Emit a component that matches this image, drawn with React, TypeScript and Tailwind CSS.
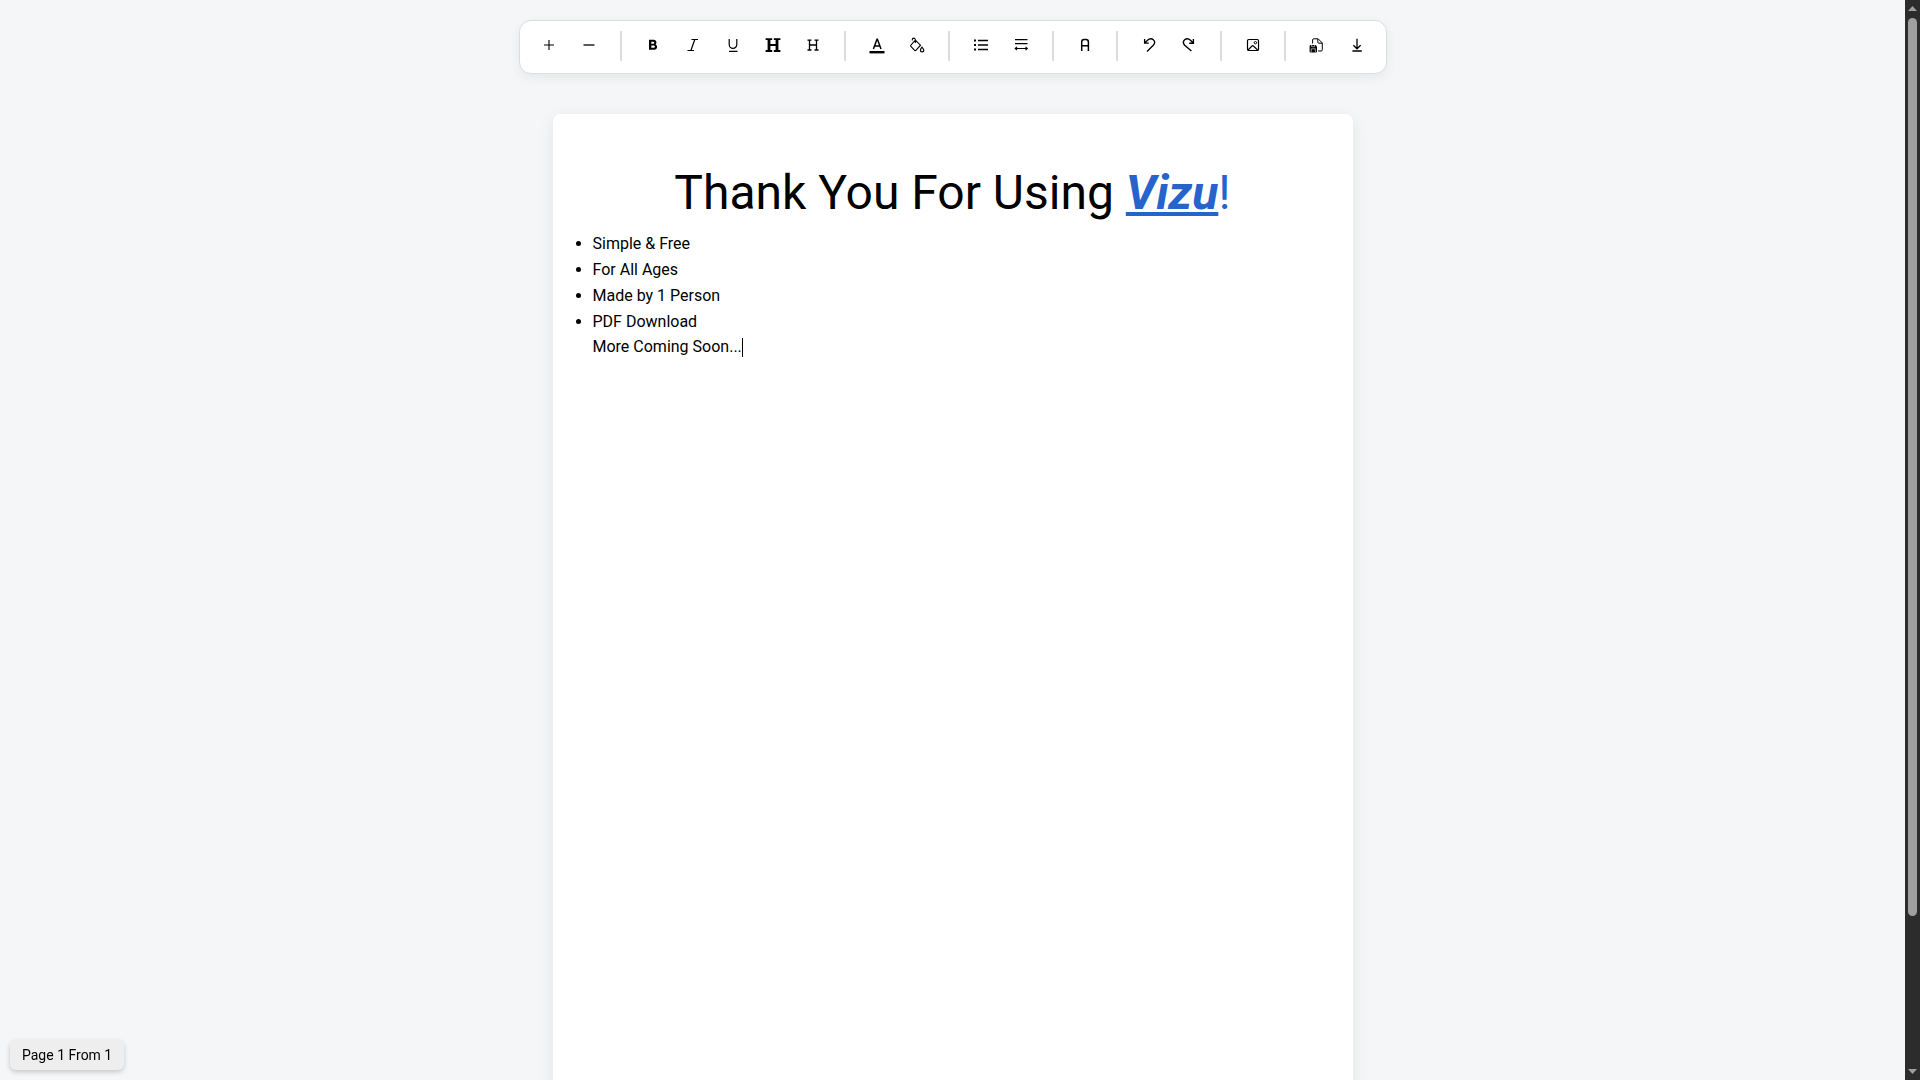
import React from 'react';
import clsx from 'clsx';

type Tool = {label: string; icon: React.ReactNode};

const toolGroups: Tool[][] = [
  [
    {
      label: 'Increase font size',
      icon: <path d="M5 10h10M10 5v10" strokeWidth="1.1" />,
    },
    {
      label: 'Decrease font size',
      icon: <path d="M4.5 10h11" strokeWidth="1.3" />,
    },
  ],
  [
    {
      label: 'Bold',
      icon: (
        <path
          d="M6 4.8h4.9a2.7 2.7 0 0 1 1.8 4.6 2.9 2.9 0 0 1-1.4 5.4H6zM8.3 6.8v1.9h2a.95.95 0 0 0 0-1.9zM8.3 10.6v2.2h2.5a1.1 1.1 0 0 0 0-2.2z"
          fill="currentColor"
          fillRule="evenodd"
          stroke="none"
        />
      ),
    },
    {
      label: 'Italic',
      icon: <path d="M8.5 4.5H15M4.5 15.5H11M11.8 4.5L7.9 15.5" />,
    },
    {
      label: 'Underline',
      icon: <path d="M6.2 4v5.6a3.8 3.8 0 0 0 7.6 0V4M6 16.3h8.5" />,
    },
    {
      label: 'Large heading',
      icon: (
        <>
          <path d="M6 4v12M14 4v12" strokeWidth="2.8" />
          <path d="M2.6 4.2h6.6M10.8 4.2h6.6M2.6 16h6.6M10.8 16h6.6M6 10h8" strokeWidth="1.8" />
        </>
      ),
    },
    {
      label: 'Small heading',
      icon: (
        <path
          d="M6.5 5v10M13.5 5v10M6.5 10h7M4.5 5.2h4M11.5 5.2h4M4.5 15h4M11.5 15h4"
          strokeWidth="1.3"
        />
      ),
    },
  ],
  [
    {
      label: 'Text color',
      icon: (
        <>
          <path d="M6.4 14L10 4.3h.4L14 14M7.6 11h5.2" strokeWidth="1.5" />
          <path d="M2.5 17.2h15" strokeWidth="2.4" />
        </>
      ),
    },
    {
      label: 'Highlight color',
      icon: (
        <>
          <path
            d="M8.3 5.2l5.2 5-4.6 5.1a.9.9 0 0 1-1.3 0L3.9 11.4a.9.9 0 0 1 0-1.3zM8.3 8V4.6a1.5 1.5 0 0 0-3 0v1"
            strokeWidth="1.1"
          />
          <path d="M15 12.2c1.1 1.3 1.8 2.1 1.8 3a1.7 1.7 0 0 1-3.4 0c0-.9.6-1.7 1.6-3z" />
        </>
      ),
    },
  ],
  [
    {
      label: 'Bullet list',
      icon: (
        <>
          <path d="M7 5.5h10M7 10h10M7 14.5h10" strokeWidth="1.6" />
          <path d="M3 5.5h2M3 10h2M3 14.5h2" strokeWidth="1.8" />
        </>
      ),
    },
    {
      label: 'Line spacing',
      icon: (
        <>
          <path d="M4 4.7h12.5M4 8.7h12.5" strokeWidth="1.3" />
          <path
            d="M4.2 13.5h12M6 11.8l-1.8 1.7L6 15.2M14.5 11.8l1.8 1.7-1.8 1.7"
            strokeWidth="1.1"
          />
        </>
      ),
    },
  ],
  [
    {
      label: 'Font family',
      icon: (
        <path
          d="M6.7 16V7A2.4 2.4 0 0 1 9.1 4.6h1.9A2.4 2.4 0 0 1 13.4 7v9M6.7 10.8h6.7"
          strokeWidth="1.5"
        />
      ),
    },
  ],
  [
    {
      label: 'Undo',
      icon: (
        <path
          d="M5.6 4v4.2h4.2M5.8 8l2.7-2.7c4.2-3.8 9.4.8 5.8 5L8 16.5"
          strokeWidth="1.3"
        />
      ),
    },
    {
      label: 'Redo',
      icon: (
        <path
          d="M14.4 4v4.2h-4.2M14.2 8l-2.7-2.7c-4.2-3.8-9.4.8-5.8 5L12.4 16"
          strokeWidth="1.4"
        />
      ),
    },
  ],
  [
    {
      label: 'Insert image',
      icon: (
        <>
          <rect x="4.5" y="4.5" width="11" height="11" rx="1.3" />
          <circle cx="12.4" cy="7.7" r="1.2" strokeWidth="1" />
          <path d="M5 15l4-4a1 1 0 0 1 1.4 0l4.2 4" strokeWidth="1.1" />
        </>
      ),
    },
  ],
  [
    {
      label: 'Save document',
      icon: (
        <>
          <path
            d="M5.6 8.5V5a1.2 1.2 0 0 1 1.2-1.2h4.4L15.3 8v6.8a1.2 1.2 0 0 1-1.2 1.2h-3M10.8 4v3.2a1 1 0 0 0 1 1h3.4"
            strokeWidth="1"
          />
          <path
            d="M3.6 9.9h5l1.4 1.5v5a1 1 0 0 1-1 1H3.6a1 1 0 0 1-1-1v-5.5a1 1 0 0 1 1-1z"
            fill="currentColor"
            stroke="none"
          />
          <path d="M4.6 10v1.7h3V10M4.2 17.2v-3.4h4.2v3.4" stroke="#fff" strokeWidth=".6" />
        </>
      ),
    },
    {
      label: 'Download PDF',
      icon: (
        <path
          d="M10 3.8v9.8M6.4 10.2l3.6 3.6 3.6-3.6M5.4 16h9.4"
          strokeWidth="1.3"
        />
      ),
    },
  ],
];

const features = ['Simple & Free', 'For All Ages', 'Made by 1 Person', 'PDF Download'];

const ToolButton = ({label, icon}: Tool) => (
  <button
    type="button"
    aria-label={label}
    title={label}
    className="flex h-7 w-8 items-center justify-center rounded hover:bg-gray-100">
    <svg
      viewBox="0 0 20 20"
      className="size-5"
      fill="none"
      stroke="currentColor"
      strokeWidth="1.2"
      aria-hidden="true">
      {icon}
    </svg>
  </button>
);

const Toolbar = () => (
  <header
    role="toolbar"
    aria-label="Formatting"
    className="flex items-start gap-2 rounded-xl border border-[#dddddd] bg-white px-[13px] pt-2.5 pb-3 shadow-[0_4px_12px_rgba(0,0,0,0.06)]">
    {toolGroups.map((group, i) => (
      <div key={group[0].label} className="flex gap-2">
        {i > 0 && <span className="mx-[7px] h-[30px] w-0.5 bg-[#dddddd]" />}
        {group.map((tool) => (
          <ToolButton key={tool.label} {...tool} />
        ))}
      </div>
    ))}
  </header>
);

const Scrollbar = () => (
  <div
    aria-hidden="true"
    className="flex w-[15px] shrink-0 flex-col items-center bg-[#2c2c2c] py-1.5 text-[#9f9f9f]">
    <svg viewBox="0 0 9 5" className="h-[5px] w-[9px]" fill="currentColor">
      <path d="M0 5L4.5 0L9 5z" />
    </svg>
    <div className="flex w-[9px] grow flex-col py-[7px]">
      <div className="h-[86%] rounded-full bg-[#9f9f9f]" />
    </div>
    <svg viewBox="0 0 9 5" className="h-[5px] w-[9px]" fill="currentColor">
      <path d="M0 0L4.5 5L9 0z" />
    </svg>
  </div>
);

const Page = () => (
  <article
    className={clsx(
      'min-h-[1123px] w-full max-w-[800px] shrink-0 rounded-lg bg-white p-10',
      'shadow-[0_4px_16px_rgba(0,0,0,0.08)]'
    )}>
    <h1 className="text-center text-5xl leading-[77px]">
      Thank You For Using{' '}
      <span className="text-[#2664cc]">
        <b className="font-bold italic underline">Vizu</b>!
      </span>
    </h1>
    <ul className="list-disc text-base leading-[26px]">
      {features.map((feature) => (
        <li key={feature}>{feature}</li>
      ))}
    </ul>
    <p className="flex items-center text-base leading-6">
      More Coming Soon...
      <span className="h-[19px] w-px bg-black" />
    </p>
  </article>
);

export default function App(): React.JSX.Element {
  return (
    <div className="flex h-screen overflow-hidden bg-[#f4f6f8] font-[Roboto,sans-serif] text-black">
      <main className="flex grow flex-col items-center gap-10 overflow-hidden pt-5">
        <Toolbar />
        <Page />
      </main>
      <Scrollbar />
      <div className="fixed bottom-2.5 left-2.5 rounded-md bg-[#eeeeee] px-3 py-[5px] text-sm leading-5 shadow-[0_2px_5px_rgba(0,0,0,0.2)]">
        Page 1 From 1
      </div>
    </div>
  );
}
